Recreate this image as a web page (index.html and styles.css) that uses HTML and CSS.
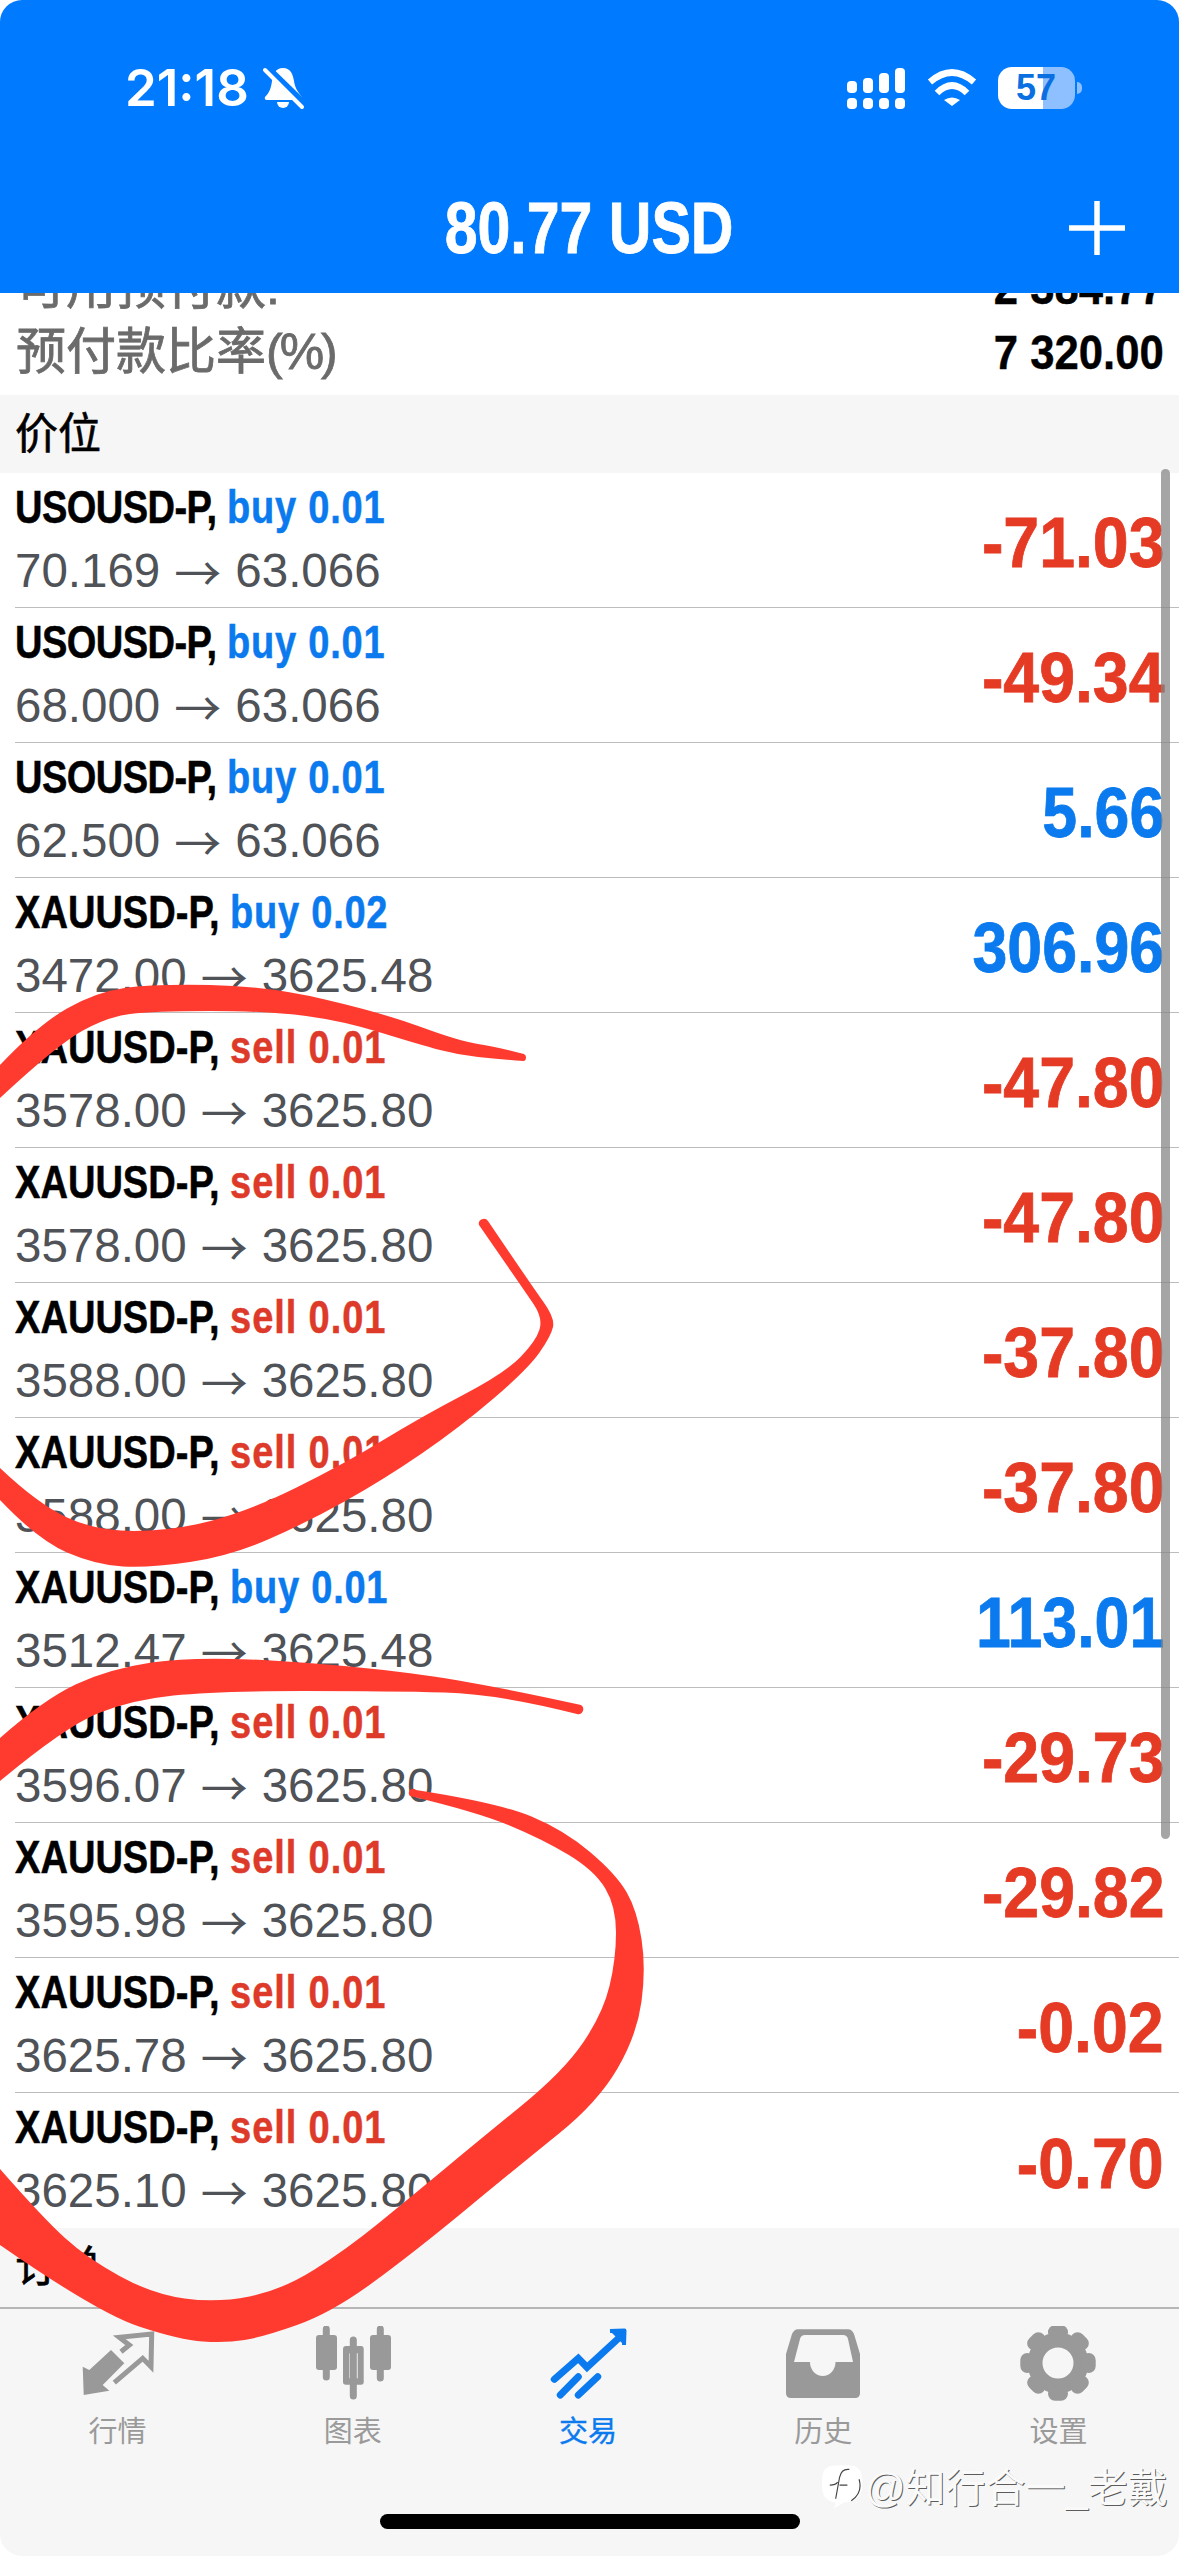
FILE: index.html
```html
<!DOCTYPE html>
<html lang="zh">
<head>
<meta charset="utf-8">
<title>交易</title>
<link rel="stylesheet" href="styles.css">
</head>
<body>
<div class="app">
  <header class="header">
    <div class="status">
      <div class="status-left">
        <span class="time">21:18</span>
        <svg class="bell" viewBox="0 0 40 43"><path class="w" d="M19 1C27 1 29 8 30 14C31 22 35 26 38 30Q39 33 36 33L3 33Q0 33 1 30C5 26 7 22 8 14C9 8 11 1 19 1Z"/><path class="w" d="M13 35H25A6 6 0 0 1 13 35Z"/><path class="cut" d="M3 0L42 38"/><path class="slash" d="M1 3L38 40"/></svg>
      </div>
      <div class="status-right">
        <div class="signal">
          <div class="sig-col"><i class="s1"></i><i class="dot"></i></div>
          <div class="sig-col"><i class="s2"></i><i class="dot"></i></div>
          <div class="sig-col"><i class="s3"></i><i class="dot"></i></div>
          <div class="sig-col"><i class="s4"></i><i class="dot"></i></div>
        </div>
        <svg class="wifi" viewBox="0 0 50 38"><path class="arc" d="M3 13Q25 -6 47 13"/><path class="arc" d="M10 24Q25 9 40 24"/><path class="w" d="M17 31Q25 26 33 31L25 37Z"/></svg>
        <div class="battery"><span>57</span></div>
      </div>
    </div>
    <div class="titlebar">
      <span></span>
      <h1 class="title">80.77 USD</h1>
      <svg class="plus" viewBox="0 0 56 54"><path d="M28 0V54M0 27H56"/></svg>
    </div>
  </header>

  <section class="summary">
    <div class="sum-row"><span class="sum-label">可用预付款:</span><span class="sum-value">2 384.77</span></div>
    <div class="sum-row"><span class="sum-label">预付款比率<span class="pct">(%)</span></span><span class="sum-value">7 320.00</span></div>
  </section>

  <div class="section">价位</div>

  <ul class="list">
    <li class="row"><div class="info"><div class="l1 uso"><b>USOUSD-P,</b> <span class="buy">buy 0.01</span></div><div class="l2">70.169 <span class="arrow">→</span> 63.066</div></div><div class="val neg">-71.03</div></li>
    <li class="row"><div class="info"><div class="l1 uso"><b>USOUSD-P,</b> <span class="buy">buy 0.01</span></div><div class="l2">68.000 <span class="arrow">→</span> 63.066</div></div><div class="val neg">-49.34</div></li>
    <li class="row"><div class="info"><div class="l1 uso"><b>USOUSD-P,</b> <span class="buy">buy 0.01</span></div><div class="l2">62.500 <span class="arrow">→</span> 63.066</div></div><div class="val pos">5.66</div></li>
    <li class="row"><div class="info"><div class="l1"><b>XAUUSD-P,</b> <span class="buy">buy 0.02</span></div><div class="l2">3472.00 <span class="arrow">→</span> 3625.48</div></div><div class="val pos">306.96</div></li>
    <li class="row"><div class="info"><div class="l1"><b>XAUUSD-P,</b> <span class="sell">sell 0.01</span></div><div class="l2">3578.00 <span class="arrow">→</span> 3625.80</div></div><div class="val neg">-47.80</div></li>
    <li class="row"><div class="info"><div class="l1"><b>XAUUSD-P,</b> <span class="sell">sell 0.01</span></div><div class="l2">3578.00 <span class="arrow">→</span> 3625.80</div></div><div class="val neg">-47.80</div></li>
    <li class="row"><div class="info"><div class="l1"><b>XAUUSD-P,</b> <span class="sell">sell 0.01</span></div><div class="l2">3588.00 <span class="arrow">→</span> 3625.80</div></div><div class="val neg">-37.80</div></li>
    <li class="row"><div class="info"><div class="l1"><b>XAUUSD-P,</b> <span class="sell">sell 0.01</span></div><div class="l2">3588.00 <span class="arrow">→</span> 3625.80</div></div><div class="val neg">-37.80</div></li>
    <li class="row"><div class="info"><div class="l1"><b>XAUUSD-P,</b> <span class="buy">buy 0.01</span></div><div class="l2">3512.47 <span class="arrow">→</span> 3625.48</div></div><div class="val pos">113.01</div></li>
    <li class="row"><div class="info"><div class="l1"><b>XAUUSD-P,</b> <span class="sell">sell 0.01</span></div><div class="l2">3596.07 <span class="arrow">→</span> 3625.80</div></div><div class="val neg">-29.73</div></li>
    <li class="row"><div class="info"><div class="l1"><b>XAUUSD-P,</b> <span class="sell">sell 0.01</span></div><div class="l2">3595.98 <span class="arrow">→</span> 3625.80</div></div><div class="val neg">-29.82</div></li>
    <li class="row"><div class="info"><div class="l1"><b>XAUUSD-P,</b> <span class="sell">sell 0.01</span></div><div class="l2">3625.78 <span class="arrow">→</span> 3625.80</div></div><div class="val neg">-0.02</div></li>
    <li class="row"><div class="info"><div class="l1"><b>XAUUSD-P,</b> <span class="sell">sell 0.01</span></div><div class="l2">3625.10 <span class="arrow">→</span> 3625.80</div></div><div class="val neg">-0.70</div></li>
  </ul>

  <div class="section section-last">订单</div>

  <nav class="tabbar">
    <div class="tabs">
      <div class="tab">
        <svg class="icon" viewBox="0 0 90 76"><path class="g" d="M9.7 40.7L16.3 44L38 24L51.3 37.3L29.7 59L36.3 64.7L10.7 69Z"/><path class="gl" d="M41.3 56.7L69.7 32.3L78 40.7L78.7 8L46.3 11.3L56.3 19L48 25.7"/></svg>
        <span>行情</span>
      </div>
      <div class="tab">
        <svg class="icon" viewBox="0 0 90 76"><path class="gw" d="M18.3 3V51M45.3 14V70M72.3 3V52"/><rect class="g" x="8" y="9" width="21" height="35" rx="3"/><rect class="g" x="62" y="9" width="21" height="35" rx="3"/><path class="g" fill-rule="evenodd" d="M38 20H53Q55.7 20 55.7 23V56Q55.7 58.7 53 58.7H38Q35 58.7 35 56V23Q35 20 38 20ZM41.3 27.3V52.3H49.7V27.3Z"/></svg>
        <span>图表</span>
      </div>
      <div class="tab active">
        <svg class="icon" viewBox="0 0 90 76"><path class="bl" d="M11.3 53.3L35.3 32.3L44 41.3L78 10"/><path class="bf" d="M67 5L81.5 4.5L81 19"/><path class="bl" d="M17.3 69L35.3 50.7M35.3 69L54.7 50.7"/></svg>
        <span>交易</span>
      </div>
      <div class="tab">
        <svg class="icon" viewBox="0 0 90 76"><path class="g" fill-rule="evenodd" d="M20 3.3H70Q74 3.3 76 8L82 28V67Q82 72 77 72H13Q8 72 8 67V28L14 8Q16 3.3 20 3.3ZM27 9Q23 9 22 13L16 36H32A12.7 14 0 0 0 57.5 36H75L70 13Q69 9 65 9Z"/></svg>
        <span>历史</span>
      </div>
      <div class="tab">
        <svg class="icon" viewBox="0 0 90 76">
          <circle class="ring" cx="45" cy="37" r="23"/>
          <g class="g">
            <rect x="35" y="-0.7" width="20" height="14" rx="7"/>
            <rect x="35" y="-0.7" width="20" height="14" rx="7" transform="rotate(45 45 37)"/>
            <rect x="35" y="-0.7" width="20" height="14" rx="7" transform="rotate(90 45 37)"/>
            <rect x="35" y="-0.7" width="20" height="14" rx="7" transform="rotate(135 45 37)"/>
            <rect x="35" y="-0.7" width="20" height="14" rx="7" transform="rotate(180 45 37)"/>
            <rect x="35" y="-0.7" width="20" height="14" rx="7" transform="rotate(225 45 37)"/>
            <rect x="35" y="-0.7" width="20" height="14" rx="7" transform="rotate(270 45 37)"/>
            <rect x="35" y="-0.7" width="20" height="14" rx="7" transform="rotate(315 45 37)"/>
          </g>
        </svg>
        <span>设置</span>
      </div>
    </div>
    <div class="home"></div>
  </nav>

  <div class="scrollbar"></div>

  <div class="watermark">
    <svg class="wm-logo" viewBox="0 0 42 46"><path class="wm-blob" d="M14 0H28Q41 0 41 14V22Q41 36 22 38L12 44Q14 40 14 38Q0 36 0 22V14Q0 0 14 0Z"/><path class="wm-f" d="M8 20Q14 20 16 17M28 4Q20 3 18 12L14 34M18 20H26M38 14Q42 28 30 36"/></svg>
    <span class="wm-text">@知行合一_老戴</span>
  </div>

  <svg class="marks" viewBox="0 0 1179 2556">
    <path d="M0 1065Q38 1025 67 1008.5Q96 992 124.5 988Q153 984 210 985Q268 986 325 999.5Q383 1013 421 1027Q459 1041 478 1044Q498 1047 524 1054A4 4 0 0 1 524 1061Q498 1059 478 1057Q459 1055 440 1050Q421 1045 382 1033Q344 1021 306 1016Q268 1011 210 1011Q153 1011 130 1014Q107 1017 82 1031Q57 1045 0 1098Z"/>
    <path d="M479 1225Q524 1290 533.5 1304Q543 1318 539.5 1329.5Q536 1341 520.5 1357Q505 1373 463 1395Q421 1417 382.5 1440.5Q344 1464 296.5 1487.5Q249 1511 210.5 1521Q172 1531 134 1531Q96 1531 67 1517.5Q38 1504 0 1468L0 1500Q38 1540 67 1552.5Q96 1565 123 1566.5Q150 1568 190 1562Q230 1556 268 1539.5Q306 1523 344.5 1501.5Q383 1480 421 1454Q459 1428 493.5 1398.5Q528 1369 539.5 1352.5Q551 1336 553 1327Q555 1318 543.5 1302Q532 1286 488 1221A5 5 0 0 0 479 1225Z"/>
    <path d="M0 1738Q43 1700 75.5 1684.5Q108 1669 151.5 1662.5Q195 1656 271 1660.5Q347 1665 412 1673.5Q477 1682 581 1705A5 5 0 0 1 577 1714Q499 1694 444.5 1692.5Q390 1691 303.5 1691Q217 1691 173.5 1695.5Q130 1700 97.5 1713.5Q65 1727 0 1781Z"/>
    <path d="M416 1790Q499 1803 531.5 1816.5Q564 1830 590 1852Q616 1874 626.5 1892Q637 1910 641.5 1939Q646 1968 641.5 2001.5Q637 2035 617.5 2068.5Q598 2102 559 2133.5Q520 2165 466 2209.5Q412 2254 371.5 2283.5Q331 2313 297 2325Q263 2337 244.5 2340Q226 2343 203 2341.5Q180 2340 139 2326.5Q98 2313 0 2245L0 2169Q43 2218 65 2238Q87 2258 119.5 2276Q152 2294 184.5 2298.5Q217 2303 249.5 2296.5Q282 2290 314.5 2269.5Q347 2249 379.5 2222.5Q412 2196 444.5 2169Q477 2142 520.5 2106.5Q564 2071 583.5 2042Q603 2013 609.5 1986Q616 1959 616 1932.5Q616 1906 605 1888Q594 1870 568 1854.5Q542 1839 509.5 1825.5Q477 1812 410 1796A3 3 0 0 1 416 1790Z"/>
  </svg>
</div>
</body>
</html>
```
FILE: styles.css
```css
* { box-sizing: border-box; }
html, body { margin: 0; padding: 0; background: #fff; }
body { font-family: "Liberation Sans", "Noto Sans CJK SC", sans-serif; }
.app { position: relative; width: 1179px; height: 2556px; overflow: hidden; border-radius: 22px; display: flex; flex-direction: column; background: #fff; }

.header { height: 293px; flex: none; background: #007aff; color: #fff; padding-top: 67px; }
.status { height: 42px; display: flex; justify-content: space-between; align-items: center; padding: 0 104px 0 125px; }
.status-left { display: flex; align-items: center; gap: 15px; }
.time { font-family: Inter, "Liberation Sans", sans-serif; font-weight: 600; font-size: 51px; line-height: 42px; }
.bell { width: 40px; height: 43px; display: block; overflow: visible; }
.w { fill: #fff; }
.cut { stroke: #007aff; stroke-width: 6; fill: none; }
.slash { stroke: #fff; stroke-width: 4; fill: none; stroke-linecap: round; }
.status-right { display: flex; align-items: center; }
.signal { display: flex; gap: 6px; height: 41px; margin-right: 22px; }
.sig-col { width: 10px; height: 41px; display: flex; flex-direction: column; justify-content: flex-end; gap: 5px; }
.sig-col i { display: block; background: #fff; border-radius: 4px; }
.sig-col .dot { height: 11px; }
.s1 { height: 12px; }
.s2 { height: 15px; }
.s3 { height: 20px; }
.s4 { height: 25px; }
.wifi { width: 50px; height: 38px; display: block; margin-right: 21px; }
.arc { fill: none; stroke: #fff; stroke-width: 6.5; }
.battery { position: relative; width: 77px; height: 42px; border-radius: 14px; background: linear-gradient(90deg, #fff 45px, #8ebfff 45px); color: #0a6fe0; font-weight: 700; font-size: 36px; line-height: 42px; padding-left: 18px; }
.battery::after { content: ""; position: absolute; left: 79px; top: 15px; width: 5px; height: 12px; border-radius: 0 6px 6px 0; background: #8ebfff; }

.titlebar { display: grid; grid-template-columns: 1fr auto 1fr; align-items: center; margin-top: 79px; height: 80px; padding: 0 54px; }
.title { margin: 0; font-size: 72px; line-height: 80px; font-weight: 700; transform: scaleX(.82); white-space: nowrap; -webkit-text-stroke: .8px #fff; }
.plus { justify-self: end; width: 56px; height: 54px; display: block; }
.plus path { stroke: #fff; stroke-width: 5.5; fill: none; }

.summary { height: 102px; flex: none; display: flex; flex-direction: column; justify-content: flex-end; overflow: hidden; padding-bottom: 10px; background: #fff; }
.sum-row { flex: none; height: 65px; display: flex; justify-content: space-between; align-items: center; padding: 0 15px 0 16px; }
.sum-label { font-size: 50px; line-height: 65px; color: #6b6b6b; -webkit-text-stroke: .8px #6b6b6b; white-space: nowrap; }
.pct { letter-spacing: -3px; }
.sum-value { font-size: 48px; line-height: 65px; font-weight: 700; color: #000; transform: scaleX(.91); transform-origin: right center; white-space: nowrap; -webkit-text-stroke: .4px #000; }

.section { height: 78px; flex: none; background: #f6f6f6; padding-left: 15px; font-size: 43px; line-height: 78px; color: #000; -webkit-text-stroke: .6px #000; }
.section-last { height: 79px; }

.list { list-style: none; margin: 0; padding: 0; flex: none; }
.row { height: 135px; margin-left: 15px; padding-right: 15px; border-bottom: 1px solid #bdbdbd; display: flex; justify-content: space-between; }
.row:last-child { border-bottom: none; }
.info { padding-top: 5px; }
.l1 { font-size: 47px; line-height: 58px; font-weight: 700; color: #000; transform: scaleX(.81); transform-origin: left center; white-space: nowrap; -webkit-text-stroke: .5px currentColor; }
.l1 b { font-weight: 700; }
.uso b { letter-spacing: -.7px; }
.buy { color: #0a7aee; letter-spacing: .9px; }
.sell { color: #dd3a2a; letter-spacing: 1.1px; }
.l2 { font-size: 47.5px; line-height: 58px; margin-top: 6px; color: #4f5257; white-space: nowrap; display: flex; gap: 14px; }
.arrow { font-family: "Noto Sans CJK SC", sans-serif; font-size: 47px; line-height: 58px; }
.val { align-self: center; margin-top: 6px; font-size: 70px; line-height: 70px; font-weight: 700; transform: scaleX(.92); transform-origin: right center; white-space: nowrap; -webkit-text-stroke: .8px currentColor; }
.neg { color: #e53a24; }
.pos { color: #0a7aee; transform: scaleX(.895); }

.tabbar { flex: 1; background: #f6f6f6; border-top: 2px solid #b6b6b6; padding-top: 17px; display: flex; flex-direction: column; }
.tabs { display: flex; padding-right: 3px; }
.tab { flex: 1; display: flex; flex-direction: column; align-items: center; color: #9a9a9a; font-size: 29px; line-height: 32px; gap: 14px; }
.tab.active { color: #0a7aee; -webkit-text-stroke: .4px #0a7aee; }
.icon { width: 90px; height: 76px; display: block; }
.g { fill: #999; }
.gl { fill: none; stroke: #999; stroke-width: 5; stroke-linejoin: miter; }
.gw { fill: none; stroke: #999; stroke-width: 7; stroke-linecap: round; }
.bl { fill: none; stroke: #0a7aee; stroke-width: 7; stroke-linecap: round; stroke-linejoin: miter; }
.bf { fill: #0a7aee; stroke: #0a7aee; stroke-width: 4; stroke-linejoin: round; }
.ring { fill: none; stroke: #999; stroke-width: 15; }
.home { align-self: center; width: 420px; height: 15px; border-radius: 8px; background: #000; margin-top: 66px; }

.scrollbar { position: absolute; left: 1161px; top: 469px; width: 9px; height: 1370px; border-radius: 5px; background: rgba(130, 130, 130, .72); }

.watermark { position: absolute; left: 822px; top: 2465px; display: flex; align-items: center; gap: 2px; }
.wm-logo { width: 41px; height: 46px; display: block; }
.wm-blob { fill: #fff; }
.wm-f { fill: none; stroke: #444; stroke-width: 1.2; }
.wm-text { font-size: 40px; line-height: 44px; color: #fafafa; text-shadow: 1px 1px 0 rgba(0, 0, 0, .65); white-space: nowrap; }

.marks { position: absolute; left: 0; top: 0; width: 1179px; height: 2556px; }
.marks path { fill: #ff3b30; }
```
